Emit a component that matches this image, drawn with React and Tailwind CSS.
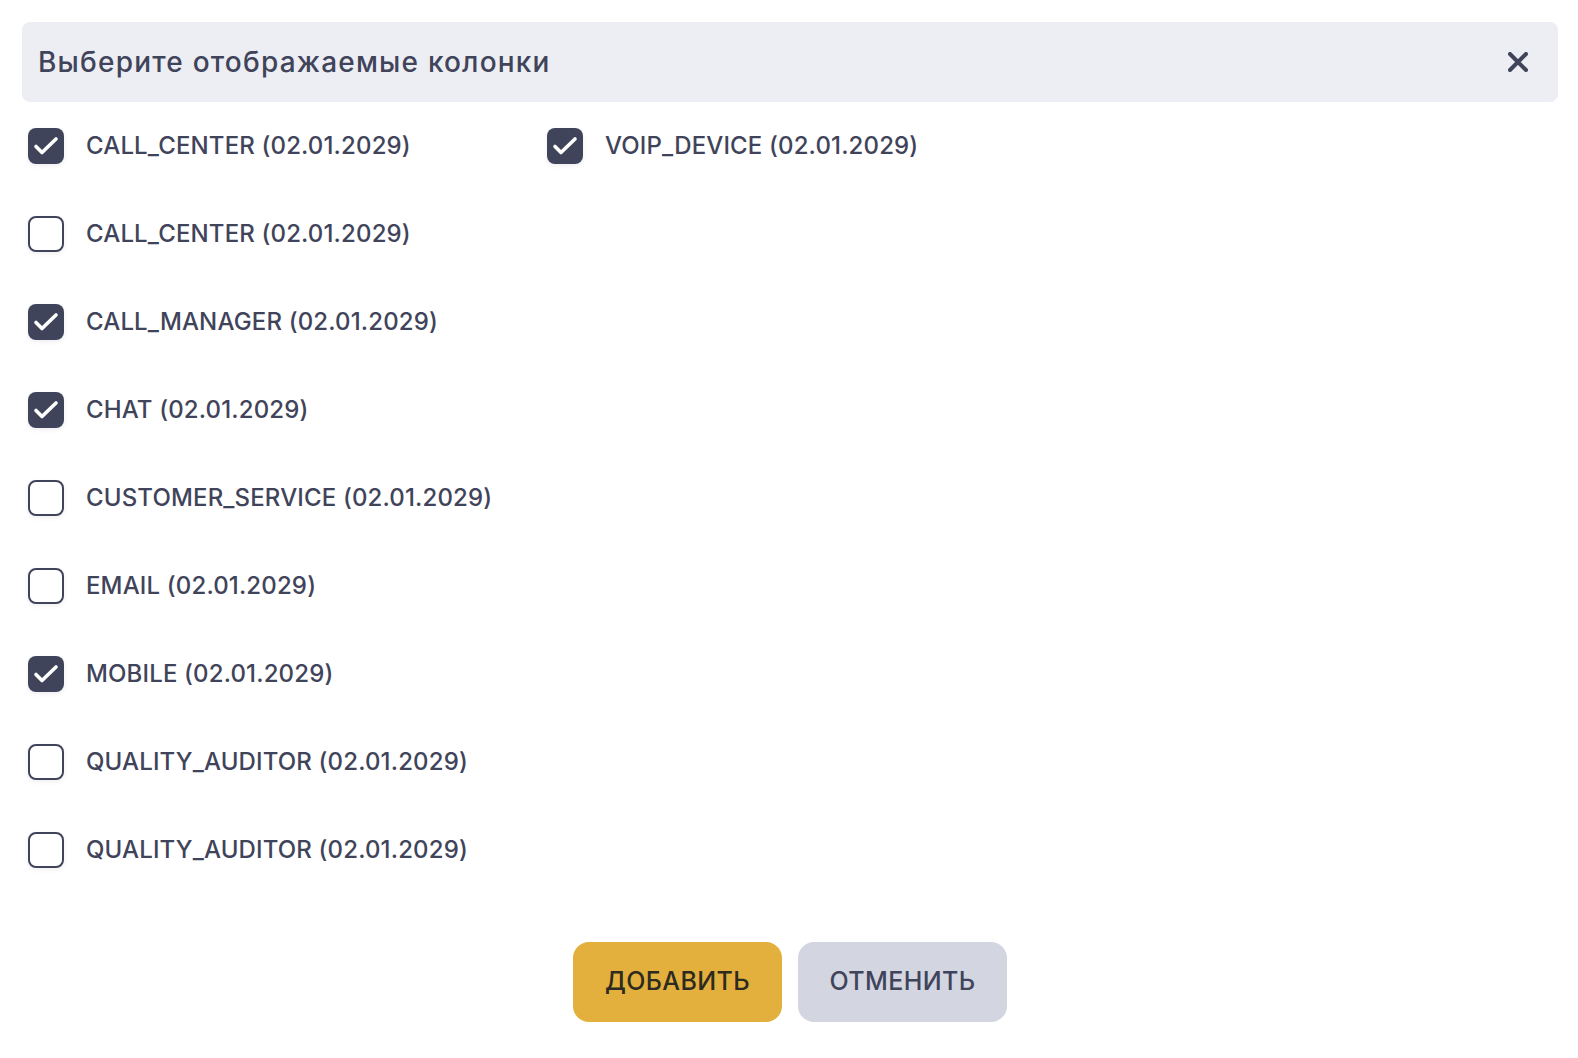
const columns = [
  [
    { name: 'CALL_CENTER (02.01.2029)', checked: true },
    { name: 'CALL_CENTER (02.01.2029)', checked: false },
    { name: 'CALL_MANAGER (02.01.2029)', checked: true },
    { name: 'CHAT (02.01.2029)', checked: true },
    { name: 'CUSTOMER_SERVICE (02.01.2029)', checked: false },
    { name: 'EMAIL (02.01.2029)', checked: false },
    { name: 'MOBILE (02.01.2029)', checked: true },
    { name: 'QUALITY_AUDITOR (02.01.2029)', checked: false },
    { name: 'QUALITY_AUDITOR (02.01.2029)', checked: false },
  ],
  [{ name: 'VOIP_DEVICE (02.01.2029)', checked: true }],
];

const Row = ({ name, checked }) => (
  <div className="flex items-center h-[36px] mb-[52px]">
    {checked ? (
      <span className="w-[36px] h-[36px] rounded-lg bg-[#3f445a] shadow-[0_2px_4px_rgba(63,68,90,0.08)] flex items-center justify-center">
        <svg width="26" height="20" viewBox="0 0 26 20" fill="none">
          <path d="M3 10.5L9 16.5L23 3" stroke="white" strokeWidth="3.6" strokeLinecap="round" strokeLinejoin="round" />
        </svg>
      </span>
    ) : (
      <span className="w-[36px] h-[36px] rounded-lg bg-white border-2 border-[#3f445a] shadow-[0_2px_4px_rgba(63,68,90,0.08)]" />
    )}
    <span className="ml-[22px] text-[24px] font-medium tracking-[0.15px] text-[#3f445a] whitespace-nowrap">{name}</span>
  </div>
);

const App = () => {
  return (
    <div className="w-[1578px] h-[1058px] bg-white pl-[22px] pr-[20px] pt-[22px] font-['Inter',sans-serif]">
      <div className="h-[80px] rounded-lg bg-[#edeef3] flex items-center justify-between pl-[16px] pr-[30px]">
        <span className="text-[28px] font-medium tracking-[1.2px] text-[#3f445a]">Выберите отображаемые колонки</span>
        <svg width="20" height="20" viewBox="0 0 20 20" fill="none">
          <path d="M2 2L18 18M18 2L2 18" stroke="#3f445a" strokeWidth="4" strokeLinecap="round" />
        </svg>
      </div>
      <div className="flex pl-[6px] pt-[26px]">
        {columns.map((col, i) => (
          <div key={i} className="w-[519px]">
            {col.map((item, j) => (
              <Row key={j} name={item.name} checked={item.checked} />
            ))}
          </div>
        ))}
      </div>
      <div className="flex justify-center gap-4 mt-[22px]">
        <button className="w-[209px] h-[80px] rounded-2xl bg-[#e3b03d] text-[25px] font-medium tracking-[0.4px] text-[#2d2a20]">ДОБАВИТЬ</button>
        <button className="w-[209px] h-[80px] rounded-2xl bg-[#d3d5e0] text-[25px] font-medium tracking-[0.4px] text-[#3f445a]">ОТМЕНИТЬ</button>
      </div>
    </div>
  );
};

export default App;
